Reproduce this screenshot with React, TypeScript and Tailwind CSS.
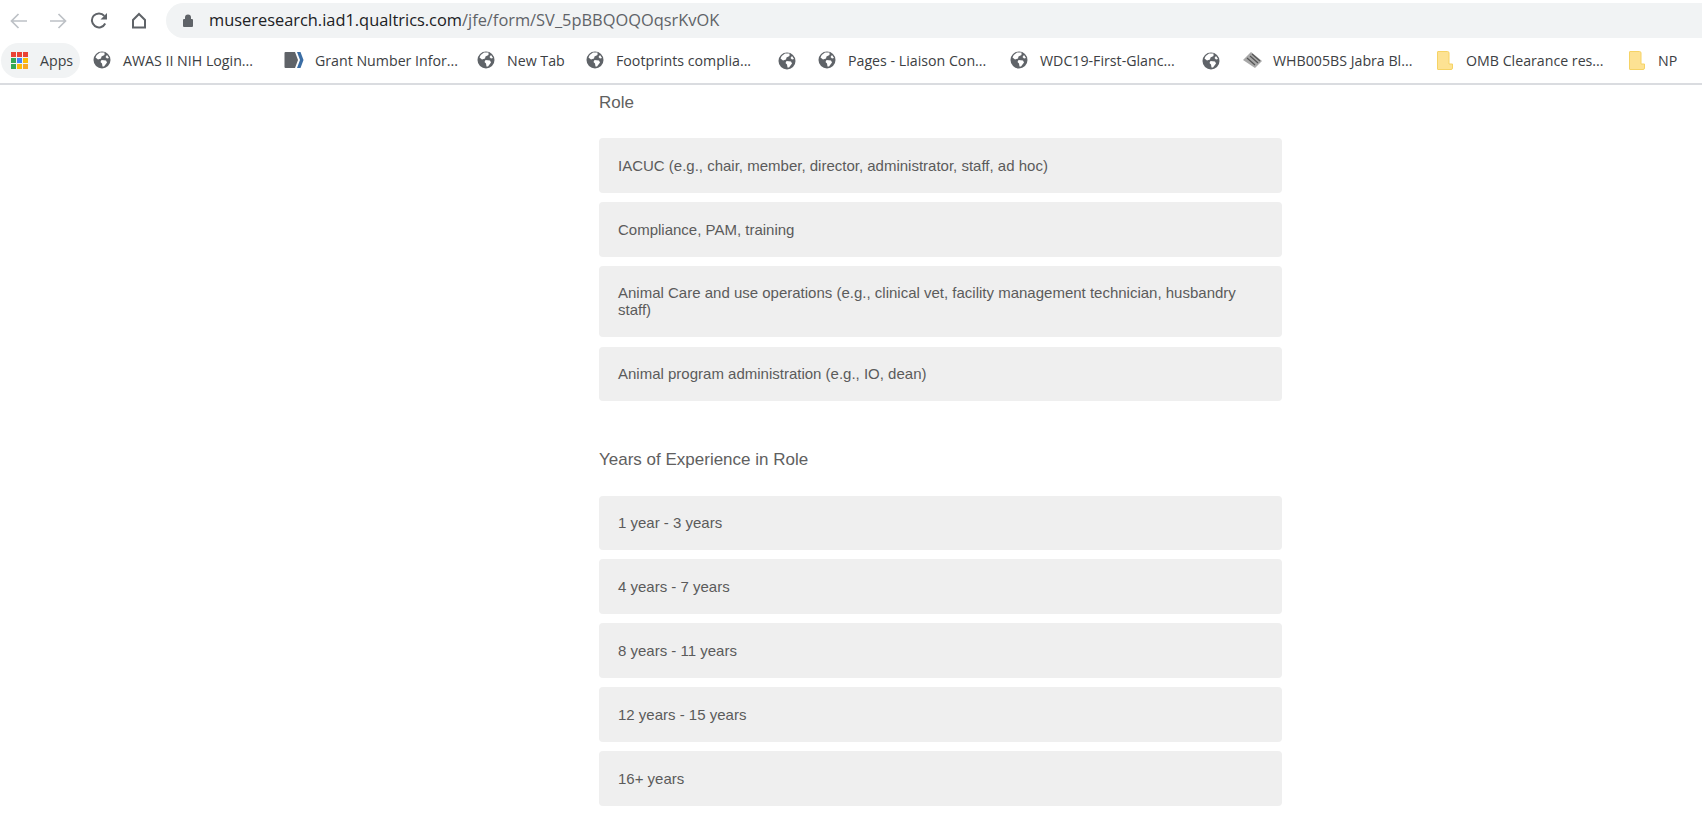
import React from "react";

const Globe = () => (
  <svg width="18" height="18" viewBox="0 0 18 18" className="shrink-0">
    <circle cx="9" cy="9" r="8.5" fill="#5f6368" />
    <path d="M7 1.5 L11.5 1.5 L11.5 4 L8.5 5.5 L8 7.5 L5 8.5 L2.5 6.5 Q4 3 7 1.5Z" fill="#fff" />
    <path d="M8.5 9 L13 9.5 L14 11.5 L11 15.5 L9.5 15.5 L9 12.5 L7.5 11Z" fill="#fff" />
    <path d="M14 4 L16 7 L14 7.5 L12.5 6Z" fill="#fff" />
  </svg>
);

const AppsGrid = () => {
  const colors = ["#ea4335", "#ea4335", "#ea4335", "#34a853", "#4285f4", "#fbbc05", "#34a853", "#fbbc05", "#f9a825"];
  return (
    <div className="grid grid-cols-3 gap-[1px] w-[17px] shrink-0">
      {colors.map((c, i) => (
        <span key={i} className="w-[5px] h-[5px]" style={{ backgroundColor: c }} />
      ))}
    </div>
  );
};

const Folder = () => (
  <svg width="16" height="19" viewBox="0 0 16 19" className="shrink-0">
    <path d="M1 0.5 H10.5 Q12 0.5 12 2 V13 H15.5 V17 Q15.5 18.5 14 18.5 H1 Q0.5 18.5 0.5 18 V1 Q0.5 0.5 1 0.5Z" fill="#fde293" stroke="#f6d365" />
  </svg>
);

const Docs = () => (
  <svg width="20" height="18" viewBox="0 0 20 18" className="shrink-0">
    <path d="M1.5 1 H11 L14 9 L11 17 H1.5 Q0.5 17 0.5 16 V2 Q0.5 1 1.5 1Z" fill="#5f6368" />
    <path d="M13 1 L16.5 1 L19.5 9 L16.5 17 L13 17 L16 9Z" fill="#3b6ea5" />
  </svg>
);

const Chip = () => (
  <svg width="21" height="18" viewBox="0 0 21 18" className="shrink-0">
    <path d="M1 9 L9 1 L20 10 L13 17Z" fill="#a8a8a8" />
    <path d="M5 7 L13 14 M8 5 L16 12 M10 3 L18 10" stroke="#555555" strokeWidth="1.2" />
  </svg>
);

const Bookmark = ({ icon, label, className }: { icon: React.ReactNode; label?: string; className: string }) => (
  <div className={`flex items-center shrink-0 ${className}`}>
    <div className="flex justify-center w-[18px] shrink-0">{icon}</div>
    {label && <span className="ml-[12px] whitespace-nowrap">{label}</span>}
  </div>
);

const Option = ({ text, className }: { text: string; className: string }) => (
  <div className={`flex items-center bg-[#efefef] rounded-[4px] px-[19px] pb-[1px] text-[15px] leading-[17px] text-[#5b5b5b] ${className}`}>
    <span>{text}</span>
  </div>
);

export default function App() {
  return (
    <div className="w-[1702px] h-[824px] overflow-hidden bg-white" style={{ fontFamily: '"Liberation Sans", Arial, sans-serif' }}>
      <div className="flex items-center h-[40px] pt-[1px]">
        <div className="flex items-center w-[166px] pl-[10px] shrink-0">
          <svg width="17" height="16" viewBox="0 0 17 16" fill="none" stroke="#bdc1c6" strokeWidth="1.7" className="shrink-0">
            <path d="M17 8 H1.5 M8.5 1 L1.5 8 L8.5 15" />
          </svg>
          <svg width="17" height="16" viewBox="0 0 17 16" fill="none" stroke="#bdc1c6" strokeWidth="1.7" className="ml-[23px] shrink-0">
            <path d="M0 8 H15.5 M8.5 1 L15.5 8 L8.5 15" />
          </svg>
          <svg width="18" height="17" viewBox="0 0 18 17" fill="none" className="ml-[23px] shrink-0">
            <path d="M15.2 11.5 A7 7 0 1 1 14.3 3.9" stroke="#5f6368" strokeWidth="2" />
            <path d="M17 1 V7.5 H10.5 Z" fill="#5f6368" />
          </svg>
          <svg width="16" height="17" viewBox="0 0 16 17" fill="none" stroke="#5f6368" strokeWidth="2" className="ml-[23px] shrink-0">
            <path d="M8 2 L14 8 V15.5 H2 V8 Z" />
          </svg>
        </div>
        <div className="flex items-center flex-1 h-[35px] bg-[#f1f3f4] rounded-l-full pl-[17px]">
          <svg width="10" height="13" viewBox="0 0 10 13" className="shrink-0">
            <path d="M2 5 V3.5 A3 3 0 0 1 8 3.5 V5 H9 Q10 5 10 6 V12 Q10 13 9 13 H1 Q0 13 0 12 V6 Q0 5 1 5 Z" fill="#5f6368" />
          </svg>
          <span className="ml-[16px] text-[16.4px] text-[#202124] whitespace-nowrap" style={{ fontFamily: '"Open Sans", sans-serif' }}>
            museresearch.iad1.qualtrics.com<span className="text-[#5f6368]">/jfe/form/SV_5pBBQOQOqsrKvOK</span>
          </span>
        </div>
      </div>

      <div className="flex items-center h-[41px] pb-[2px] border-b-2 border-[#dadce0] box-content text-[14.2px] text-[#3c4043]" style={{ fontFamily: '"Open Sans", sans-serif' }}>
        <div className="flex items-center h-[35px] w-[79px] ml-[1px] pl-[10px] bg-[#f1f3f4] rounded-full shrink-0">
          <AppsGrid />
          <span className="ml-[12px]">Apps</span>
        </div>
        <Bookmark icon={<Globe />} label="AWAS II NIH Login..." className="ml-[13px] w-[192px]" />
        <Bookmark icon={<Docs />} label="Grant Number Infor..." className="w-[192px]" />
        <Bookmark icon={<Globe />} label="New Tab" className="w-[109px]" />
        <Bookmark icon={<Globe />} label="Footprints complia..." className="w-[192px]" />
        <Bookmark icon={<Globe />} className="w-[40px]" />
        <Bookmark icon={<Globe />} label="Pages - Liaison Con..." className="w-[192px]" />
        <Bookmark icon={<Globe />} label="WDC19-First-Glanc..." className="w-[192px]" />
        <Bookmark icon={<Globe />} className="w-[41px]" />
        <Bookmark icon={<Chip />} label="WHB005BS Jabra Bl..." className="w-[193px]" />
        <Bookmark icon={<Folder />} label="OMB Clearance res..." className="w-[192px]" />
        <Bookmark icon={<Folder />} label="NP" className="w-[60px]" />
      </div>

      <div className="w-[683px] ml-[599px]">
        <h2 className="text-[17px] leading-[20px] text-[#606060] font-normal mt-[8px]">Role</h2>
        <div className="flex flex-col gap-[9px] mt-[25px]">
          <Option text="IACUC (e.g., chair, member, director, administrator, staff, ad hoc)" className="h-[55px]" />
          <Option text="Compliance, PAM, training" className="h-[55px]" />
          <Option text="Animal Care and use operations (e.g., clinical vet, facility management technician, husbandry staff)" className="h-[71px]" />
          <Option text="Animal program administration (e.g., IO, dean)" className="h-[54px] mt-[1px]" />
        </div>
        <h2 className="text-[17px] leading-[20px] text-[#606060] font-normal mt-[49px]">Years of Experience in Role</h2>
        <div className="flex flex-col gap-[9px] mt-[26px]">
          <Option text="1 year - 3 years" className="h-[54px]" />
          <Option text="4 years - 7 years" className="h-[55px]" />
          <Option text="8 years - 11 years" className="h-[55px]" />
          <Option text="12 years - 15 years" className="h-[55px]" />
          <Option text="16+ years" className="h-[55px]" />
        </div>
      </div>
    </div>
  );
}
